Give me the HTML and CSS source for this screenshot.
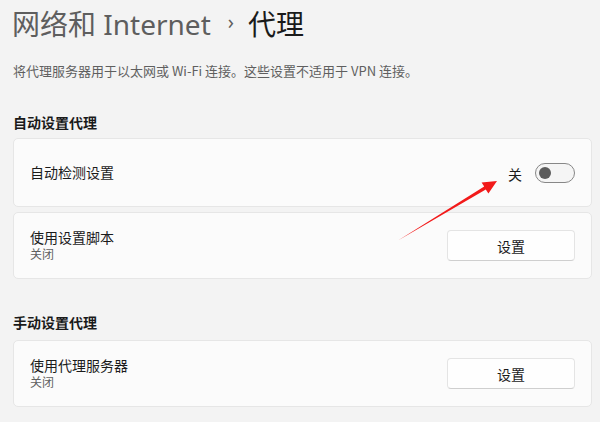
FILE: index.html
```html
<!DOCTYPE html>
<html lang="zh-CN">
<head>
<meta charset="utf-8">
<link rel="stylesheet" href="styles.css">
</head>
<body>
<div class="page">
  <h1 class="title"><span class="crumb">网络和 Internet</span><span class="sep">›</span><span class="current">代理</span></h1>
  <p class="desc">将代理服务器用于以太网或 Wi-Fi 连接。这些设置不适用于 VPN 连接。</p>

  <h2 class="section auto">自动设置代理</h2>
  <div class="card tall">
    <div class="label"><div class="name">自动检测设置</div></div>
    <div class="toggle-wrap">
      <span class="toggle-text">关</span>
      <span class="toggle"><span class="knob"></span></span>
    </div>
  </div>
  <div class="card">
    <div class="label"><div class="name">使用设置脚本</div><div class="sub">关闭</div></div>
    <button class="btn">设置</button>
  </div>

  <h2 class="section manual">手动设置代理</h2>
  <div class="card">
    <div class="label"><div class="name">使用代理服务器</div><div class="sub">关闭</div></div>
    <button class="btn">设置</button>
  </div>
</div>
<svg class="arrow" width="600" height="422" viewBox="0 0 600 422">
  <polygon points="398,240.5 484.2,186.4 481.6,182.6 497,181 488.4,193.6 485.8,189.6" fill="#f21a1a"/>
</svg>
</body>
</html>
```

FILE: styles.css
```css
html, body {
  margin: 0;
  padding: 0;
  background: #f3f3f3;
  width: 600px;
  height: 422px;
  overflow: hidden;
  position: relative;
  font-family: "Noto Sans", "Noto Sans CJK SC", sans-serif;
  color: #1b1b1b;
}

.page {
  padding: 4px 8px 0 13px;
}

.title {
  margin: 0 0 0 -1px;
  font-size: 28px;
  line-height: 40px;
  font-weight: 400;
  display: flex;
  align-items: center;
  height: 40px;
}

.crumb {
  color: #5e5e5e;
}

.sep {
  color: #5e5e5e;
  font-size: 20px;
  margin: 0 14px 0 17px;
  position: relative;
  top: -2px;
}

.current {
  color: #1a1a1a;
}

.desc {
  margin: 17px 0 0 0;
  font-size: 13px;
  line-height: 20px;
  color: #5f5f5f;
  font-family: "Noto Sans CJK SC", sans-serif;
}

.section {
  margin: 0;
  font-size: 14px;
  line-height: 20px;
  font-weight: 600;
  color: #1a1a1a;
  font-family: "Noto Sans CJK SC", sans-serif;
}

.section.auto {
  margin-top: 31px;
  margin-bottom: 6px;
}

.section.manual {
  margin-top: 33px;
  margin-bottom: 8px;
}

.card {
  box-sizing: border-box;
  height: 67px;
  background: #fbfbfb;
  border: 1px solid #e6e6e6;
  border-radius: 5px;
  display: flex;
  align-items: center;
  justify-content: space-between;
  padding: 0 16px 0 16px;
  margin-bottom: 5px;
  font-family: "Noto Sans CJK SC", sans-serif;
}

.card.tall {
  height: 69px;
}

.label {
  display: flex;
  flex-direction: column;
  padding-top: 1px;
  font-family: "Liberation Sans", "Noto Sans CJK SC", sans-serif;
}

.name {
  font-size: 14px;
  line-height: 18px;
  color: #1b1b1b;
}

.sub {
  font-size: 12px;
  line-height: 16px;
  color: #5f5f5f;
}

.toggle-wrap {
  display: flex;
  align-items: center;
  gap: 13px;
  margin-right: 0;
}

.toggle-text {
  font-size: 14px;
  line-height: 18px;
  color: #1b1b1b;
  position: relative;
  top: 1px;
}

.toggle {
  box-sizing: border-box;
  width: 40px;
  height: 20px;
  border: 1px solid #878787;
  border-radius: 10px;
  background: #f5f5f5;
  display: flex;
  align-items: center;
  padding-left: 3px;
}

.knob {
  width: 12px;
  height: 12px;
  border-radius: 50%;
  background: #5c5c5c;
}

.btn {
  box-sizing: border-box;
  width: 128px;
  height: 31px;
  margin-right: 0;
  background: #fefefe;
  border: 1px solid #e4e4e4;
  border-bottom-color: #cfcfcf;
  border-radius: 4px;
  font-family: "Noto Sans CJK SC", sans-serif;
  font-size: 14px;
  color: #1b1b1b;
  padding: 0;
  line-height: 28px;
}

.arrow {
  position: absolute;
  left: 0;
  top: 0;
  pointer-events: none;
}
```
